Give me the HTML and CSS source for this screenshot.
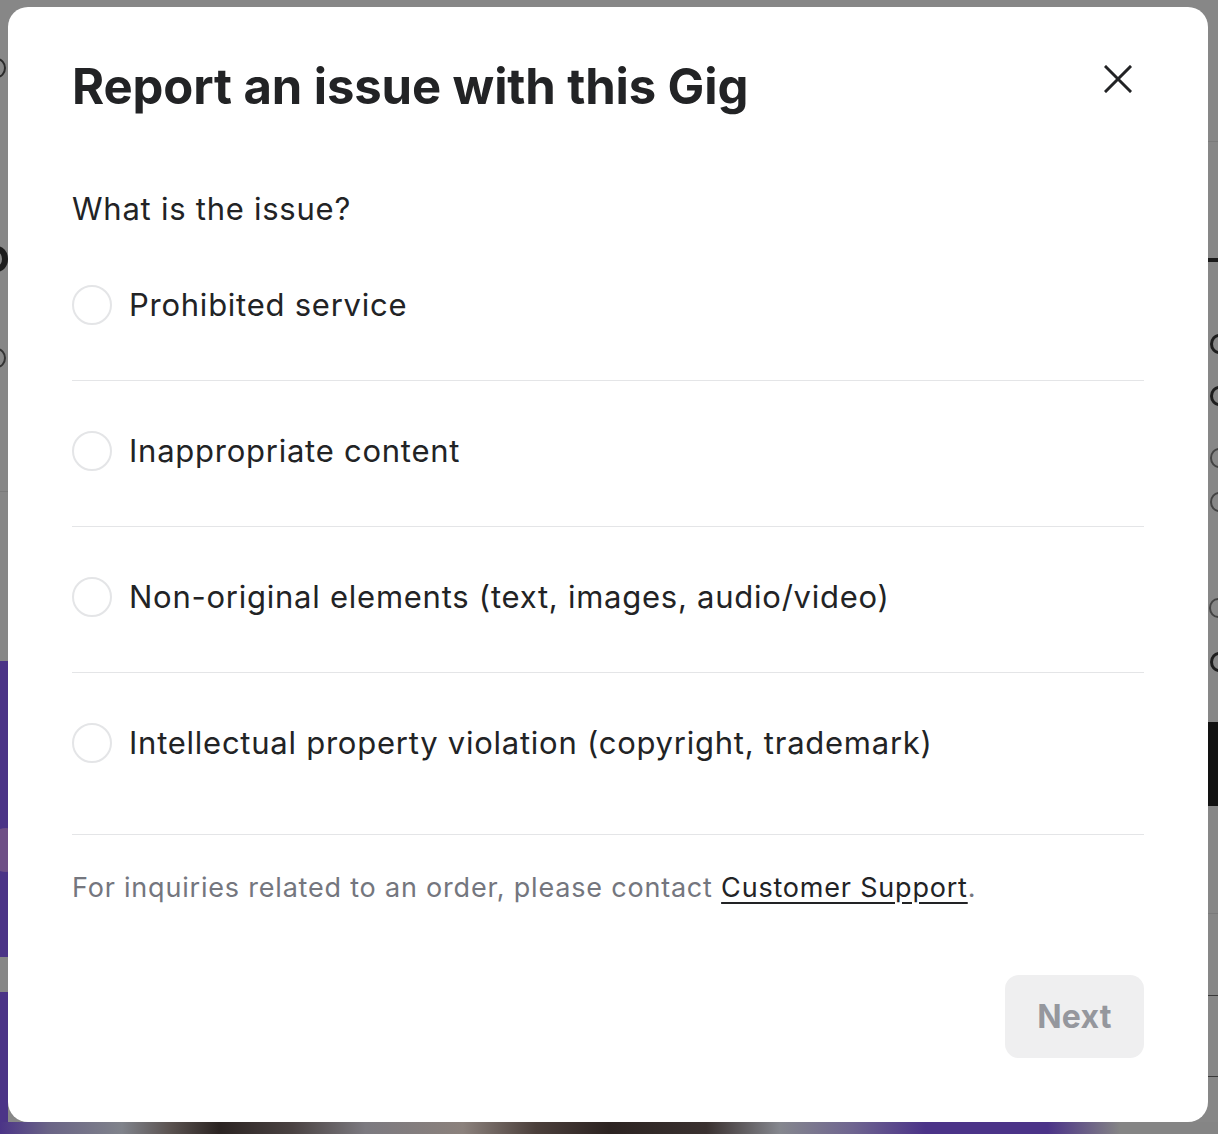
FILE: index.html
```html
<!DOCTYPE html>
<html lang="en">
<head>
<meta charset="utf-8">
<title>Report an issue with this Gig</title>
<link rel="stylesheet" href="styles.css">
</head>
<body>
<div class="page" aria-hidden="true">
  <div class="bg bg-line-top"></div>
  <div class="bg bg-dash"></div>
  <div class="bg bg-dark-bar"></div>
  <div class="bg bg-line-r1"></div>
  <div class="bg bg-line-r2"></div>
  <div class="bg bg-line-r3"></div>
  <div class="bg bg-line-l1"></div>
  <div class="bg bg-purple"></div>
  <div class="bg bg-purple-2"></div>
  <div class="bg bg-pink"></div>
  <div class="bg bg-photo"></div>
  <div class="bg ring ring-l1"></div>
  <div class="bg ring ring-l2"></div>
  <div class="bg ring ring-l3"></div>
  <div class="bg ring ring-r1"></div>
  <div class="bg ring ring-r2"></div>
  <div class="bg ring ring-r3"></div>
  <div class="bg ring ring-r4"></div>
  <div class="bg ring ring-r5"></div>
  <div class="bg ring ring-r6"></div>
</div>
<div class="overlay">
  <div class="modal" role="dialog" aria-labelledby="modal-title">
    <header class="modal-header">
      <h2 id="modal-title" class="modal-title">Report an issue with this Gig</h2>
      <button class="close-btn" aria-label="Close">
        <svg width="28" height="28" viewBox="0 0 28 28" fill="none" stroke="#222325" stroke-width="3" stroke-linecap="square"><path d="M2 2 L26 26 M26 2 L2 26"/></svg>
      </button>
    </header>
    <p class="question">What is the issue?</p>
    <ul class="options">
      <li class="option"><span class="radio"></span><span class="option-label">Prohibited service</span></li>
      <li class="option"><span class="radio"></span><span class="option-label">Inappropriate content</span></li>
      <li class="option"><span class="radio"></span><span class="option-label">Non-original elements (text, images, audio/video)</span></li>
      <li class="option option-last"><span class="radio"></span><span class="option-label">Intellectual property violation (copyright, trademark)</span></li>
    </ul>
    <p class="note">For inquiries related to an order, please contact <a href="#" class="note-link">Customer Support</a>.</p>
    <div class="actions">
      <button class="next-btn" disabled>Next</button>
    </div>
  </div>
</div>
</body>
</html>
```

FILE: styles.css
```css
* { box-sizing: border-box; }
html, body { margin: 0; padding: 0; }
body {
  width: 1218px;
  height: 1134px;
  overflow: hidden;
  font-family: Inter, "Noto Sans", sans-serif;
  background: #878787;
  position: relative;
}
.page { position: absolute; inset: 0; overflow: hidden; }
.bg { position: absolute; }
.bg-line-top { left: 1208px; right: 0; top: 141px; height: 1px; background: #7b7b7b; }
.bg-dash { left: 1208px; right: 0; top: 258px; height: 4px; background: #1a1a1a; }
.bg-dark-bar { left: 1208px; right: 0; top: 722px; height: 84px; background: #121212; }
.bg-line-r1 { left: 1208px; right: 0; top: 913px; height: 1px; background: #7b7b7b; }
.bg-line-r2 { left: 1208px; right: 0; top: 995px; height: 1px; background: #3a3a3a; }
.bg-line-r3 { left: 1208px; right: 0; top: 1076px; height: 1px; background: #3a3a3a; }
.bg-line-l1 { left: 0; width: 8px; top: 491px; height: 1px; background: #7b7b7b; }
.bg-purple { left: 0; width: 8px; top: 661px; height: 296px; background: #4b3487; }
.bg-purple-2 { left: 0; width: 8px; top: 992px; height: 142px; background: #4b3487; }
.bg-pink { left: -14px; top: 828px; width: 40px; height: 44px; border-radius: 50%; background: #6e4f86; }
.bg-photo {
  left: 0; right: 0; top: 1122px; bottom: 0;
  background: linear-gradient(90deg, #4b3487 0%, #6a6486 4%, #80838b 10%, #5a5250 14%, #2b2422 18%, #4a4242 24%, #7c7a80 30%, #8b817c 38%, #4b3f3b 44%, #2c2321 50%, #3a3130 58%, #85878e 64%, #6f6590 70%, #4b3388 76%, #4b3388 86%, #858585 92%);
}
.ring { border: 3px solid #1e1e1e; border-radius: 50%; width: 18px; height: 20px; }
.ring-l1 { left: -12px; top: 58px; border-width: 2px; border-color: #2a2a2a; }
.ring-l2 { left: -14px; top: 246px; width: 22px; height: 26px; border-width: 6px; }
.ring-l3 { left: -12px; top: 348px; border-width: 2px; border-color: #333; }
.ring-r1 { left: 1210px; top: 334px; }
.ring-r2 { left: 1210px; top: 386px; }
.ring-r3 { left: 1210px; top: 448px; border-width: 2px; border-color: #444; }
.ring-r4 { left: 1210px; top: 492px; border-width: 2px; border-color: #444; }
.ring-r5 { left: 1209px; top: 598px; border-width: 2px; border-color: #444; }
.ring-r6 { left: 1210px; top: 652px; }

.overlay { position: absolute; inset: 0; padding: 7px 10px 12px 8px; display: flex; }
.modal {
  width: 1200px;
  height: 1115px;
  background: #fff;
  border-radius: 20px;
  padding: 48px 64px 64px 64px;
  display: flex;
  flex-direction: column;
  color: #222325;
}
.modal-header { display: flex; justify-content: space-between; align-items: flex-start; }
.modal-title { margin: 0; font-size: 49px; line-height: 64px; font-weight: 700; letter-spacing: -0.1px; }
.close-btn { background: none; border: 0; padding: 0; margin: 10px 12px 0 0; width: 28px; height: 28px; cursor: pointer; display: block; }
.close-btn svg { display: block; }
.question { margin: 70px 0 0; font-size: 31px; line-height: 40px; font-weight: 400; letter-spacing: 0.75px; }
.options { list-style: none; margin: 56px 0 0; padding: 0; }
.option { display: flex; align-items: center; gap: 17px; padding: 0 0 55px; border-bottom: 1px solid #e4e5e7; margin-bottom: 50px; }
.option-last { padding-bottom: 71px; margin-bottom: 33px; }
.radio { flex: none; width: 40px; height: 40px; border-radius: 50%; border: 2px solid #e4e5e7; }
.option-label { font-size: 31px; line-height: 40px; letter-spacing: 0.75px; }
.note { margin: 0; font-size: 27px; line-height: 40px; color: #74767e; letter-spacing: 0.8px; }
.note-link { color: #222325; text-decoration: underline; text-underline-offset: 5px; text-decoration-thickness: 2px; }
.actions { margin-top: auto; display: flex; justify-content: flex-end; }
.next-btn { width: 139px; height: 83px; border: 0; border-radius: 14px; background: #efeff0; color: #95979d; font-family: inherit; font-size: 32px; font-weight: 700; letter-spacing: 0.3px; }
```
